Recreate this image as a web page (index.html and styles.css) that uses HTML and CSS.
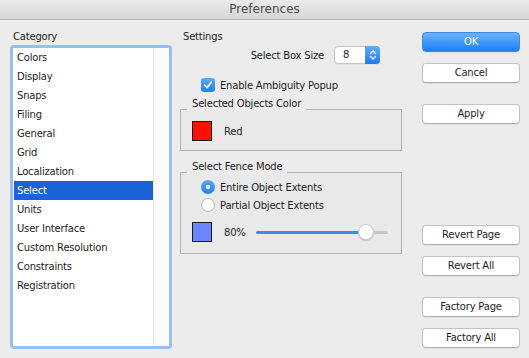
FILE: index.html
```html
<!DOCTYPE html>
<html lang="en">
<head>
  <meta charset="UTF-8" />
  <title>Preferences</title>
  <link rel="stylesheet" href="styles.css">
</head>
<body>

  <!-- title bar -->
  <div class="titlebar">Preferences</div>

  <div class="window">

    <!-- category list -->
    <div class="category">
      <div class="heading">Category</div>
      <div class="list">
        <ul class="items">
          <li>Colors</li>
          <li>Display</li>
          <li>Snaps</li>
          <li>Filing</li>
          <li>General</li>
          <li>Grid</li>
          <li>Localization</li>
          <li class="selected">Select</li>
          <li>Units</li>
          <li>User Interface</li>
          <li>Custom Resolution</li>
          <li>Constraints</li>
          <li>Registration</li>
        </ul>
        <div class="scroll-track"></div>
      </div>
    </div>

    <!-- settings -->
    <div class="settings">
      <div class="heading">Settings</div>

      <div class="size-row">
        <span>Select Box Size</span>
        <div class="popup">
          <span class="popup-value">8</span>
          <span class="stepper">
            <svg width="8" height="12" viewBox="0 0 8 12">
              <path d="M1.5 4.5 L4 2 L6.5 4.5 M1.5 7.5 L4 10 L6.5 7.5" fill="none" stroke="#fff" stroke-width="1.4" stroke-linecap="round" stroke-linejoin="round"/>
            </svg>
          </span>
        </div>
      </div>

      <div class="check-row">
        <span class="checkbox">
          <svg width="10" height="10" viewBox="0 0 10 10">
            <path d="M1.8 5.2 L4 7.6 L8.3 2.2" fill="none" stroke="#fff" stroke-width="1.7" stroke-linecap="round" stroke-linejoin="round"/>
          </svg>
        </span>
        Enable Ambiguity Popup
      </div>

      <div class="group">
        <div class="group-title"><span>Selected Objects Color</span></div>
        <div class="group-box color-box">
          <span class="swatch red"></span>
          <span class="swatch-label">Red</span>
        </div>
      </div>

      <div class="group fence">
        <div class="group-title"><span>Select Fence Mode</span></div>
        <div class="group-box fence-box">
          <div class="radio-row"><span class="radio on"></span>Entire Object Extents</div>
          <div class="radio-row"><span class="radio"></span>Partial Object Extents</div>
          <div class="opacity-row">
            <span class="swatch blue"></span>
            <span class="swatch-label">80%</span>
            <div class="slider">
              <div class="track"></div>
              <div class="thumb"></div>
            </div>
          </div>
        </div>
      </div>
    </div>

    <!-- buttons -->
    <div class="buttons">
      <div class="btn primary">OK</div>
      <div class="btn near">Cancel</div>
      <div class="btn apart">Apply</div>
      <div class="btn far">Revert Page</div>
      <div class="btn near">Revert All</div>
      <div class="btn apart">Factory Page</div>
      <div class="btn near">Factory All</div>
    </div>

  </div>

</body>
</html>
```

FILE: styles.css
```css
html, body {
  margin: 0;
  padding: 0;
  overflow: hidden;
}

body {
  width: 529px;
  height: 358px;
  background: #ececec;
  font-family: 'DejaVu Sans', sans-serif;
  font-size: 10px;
  letter-spacing: -0.2px;
  color: #1e1e1e;
}

.titlebar {
  height: 19px;
  line-height: 19px;
  text-align: center;
  font-size: 12px;
  letter-spacing: 0;
  color: #4a4a4a;
  background: linear-gradient(#ebebeb, #d6d6d6);
  border-bottom: 1px solid #b3b3b3;
}

.window {
  display: flex;
  padding: 10px 9px 0 10px;
}

.heading {
  line-height: 13px;
  padding-left: 3px;
}

/* category list */

.category {
  width: 162px;
}

.category .heading {
  margin-bottom: 2px;
}

.list {
  display: flex;
  height: 298px;
  border: 3px solid #98bfee;
  border-radius: 4px;
  background: #fff;
}

.items {
  list-style: none;
  margin: 0;
  padding: 0;
  flex: 1;
}

.items li {
  height: 19px;
  line-height: 19px;
  padding-left: 4px;
}

.items li.selected {
  margin-left: 1px;
  padding-left: 3px;
  background: #1963d8;
  color: #fff;
}

.scroll-track {
  width: 15px;
  border-left: 1px solid #ededed;
  background: #fbfbfb;
}

/* settings column */

.settings {
  width: 222px;
  margin-left: 8px;
}

.size-row {
  display: flex;
  justify-content: flex-end;
  align-items: center;
  gap: 10px;
  height: 18px;
  margin-top: 3px;
  padding-right: 22px;
}

.popup {
  display: flex;
  width: 44px;
  height: 16px;
  border: 1px solid #c4c4c4;
  border-radius: 4px;
  background: #fff;
  box-shadow: 0 1px 1px rgba(0, 0, 0, 0.06);
}

.popup-value {
  flex: 1;
  padding-left: 8px;
  line-height: 16px;
}

.stepper {
  display: flex;
  align-items: center;
  justify-content: center;
  width: 15px;
  margin: -1px -1px -1px 0;
  border-radius: 0 4px 4px 0;
  background: linear-gradient(#62abfa, #1c7cf4);
}

.check-row {
  display: flex;
  align-items: center;
  gap: 5px;
  height: 14px;
  margin-top: 14px;
  padding-left: 21px;
}

.checkbox {
  display: flex;
  align-items: center;
  justify-content: center;
  width: 14px;
  height: 14px;
  border-radius: 3px;
  background: linear-gradient(#5ea9fb, #1e7ff5);
}

/* group boxes */

.group {
  margin-top: 5px;
}

.group.fence {
  margin-top: 9px;
}

.group-title {
  line-height: 13px;
  margin-bottom: -2px;
}

.group-title span {
  display: inline-block;
  margin-left: 7px;
  padding: 0 5px 1px;
  background: #ececec;
}

.group-box {
  border: 1px solid #b4b4b4;
  background: #e9e9e9;
  padding: 0 13px 0 11px;
}

.color-box {
  display: flex;
  align-items: center;
  height: 20px;
  padding-top: 11px;
  padding-bottom: 9px;
}

.swatch {
  width: 18px;
  height: 18px;
  border: 1px solid #1a1a1a;
}

.swatch.red {
  background: #fb1200;
}

.swatch.blue {
  background: #6a86fc;
}

.swatch-label {
  margin-left: 12px;
}

.fence-box {
  height: 64px;
  padding-top: 5px;
  padding-bottom: 11px;
}

.radio-row {
  display: flex;
  align-items: center;
  gap: 5px;
  height: 18px;
  padding-left: 9px;
}

.radio {
  box-sizing: border-box;
  width: 14px;
  height: 14px;
  border-radius: 50%;
  border: 1px solid #b9b9b9;
  background: #fff;
}

.radio.on {
  border: none;
  background: radial-gradient(circle, #fff 0 2px, transparent 2.5px), linear-gradient(#5ea9fb, #1e7ff5);
}

.opacity-row {
  display: flex;
  align-items: center;
  margin-top: 8px;
}

.slider {
  position: relative;
  width: 132px;
  height: 16px;
  margin-left: auto;
  display: flex;
  align-items: center;
}

.track {
  width: 100%;
  height: 3px;
  border-radius: 2px;
  background: linear-gradient(to right, #3a8ef0 0 110px, #c6c6c6 110px);
}

.thumb {
  position: absolute;
  left: 102px;
  top: 0;
  width: 16px;
  height: 16px;
  box-sizing: border-box;
  border-radius: 50%;
  background: #fff;
  border: 1px solid #c9c9c9;
  box-shadow: 0 1px 1px rgba(0, 0, 0, 0.15);
}

/* buttons */

.buttons {
  width: 98px;
  margin-left: 20px;
}

.btn {
  box-sizing: border-box;
  height: 20px;
  line-height: 18px;
  text-align: center;
  border: 1px solid #c3c3c3;
  border-bottom-color: #acacac;
  border-radius: 4px;
  background: #fff;
  box-shadow: 0 1px 1px rgba(0, 0, 0, 0.05);
}

.btn.primary {
  margin-top: 2px;
  color: #fff;
  border-color: #3a8bf0;
  background: linear-gradient(#6bb3fb, #1a7ff7);
}

.btn.near {
  margin-top: 11px;
}

.btn.apart {
  margin-top: 21px;
}

.btn.far {
  margin-top: 101px;
}
```
